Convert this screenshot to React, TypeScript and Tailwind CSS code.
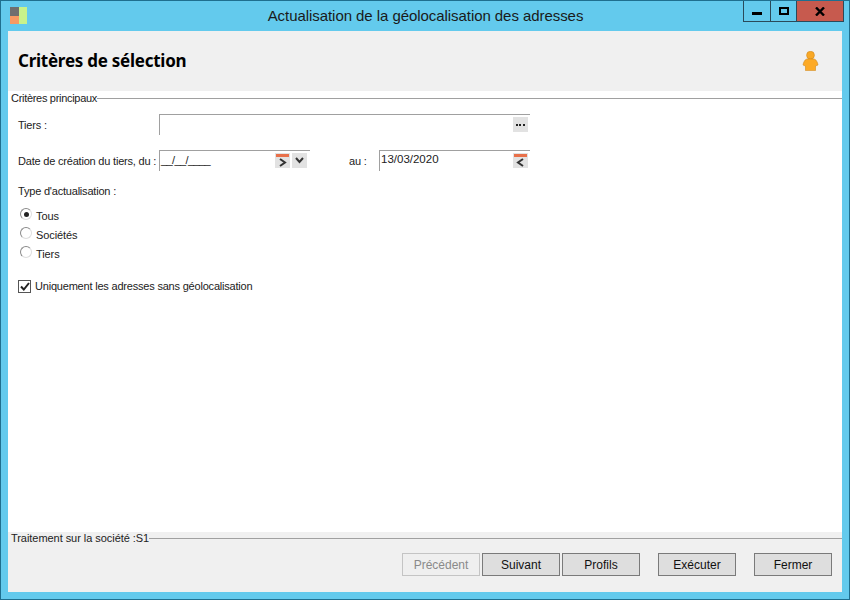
import React from 'react';

const uiFont = "font-['Liberation_Sans',Arial,sans-serif]";

const CalendarButton: React.FC<{ dir: 'next' | 'prev' }> = ({ dir }) => (
  <svg width="15" height="15" viewBox="0 0 15 15" className="shrink-0">
    <rect x="0" y="0" width="15" height="15" fill="#e2e2e2" />
    <rect x="1" y="1" width="13" height="3" fill="#e8704a" />
    <path
      d={dir === 'next' ? 'M5 6 L10 9.5 L5 13' : 'M10 6 L5 9.5 L10 13'}
      fill="none"
      stroke="#333"
      strokeWidth="2"
    />
  </svg>
);

const Radio: React.FC<{ label: string; checked?: boolean }> = ({ label, checked }) => (
  <div className="flex items-center h-[19px]">
    <span className="w-[12px] h-[12px] rounded-full border border-t-[#8a8a8a] border-l-[#8a8a8a] border-r-[#dedede] border-b-[#dedede] bg-white flex items-center justify-center -mt-[5px]">
      {checked && <span className="w-[5px] h-[5px] rounded-full bg-[#222]" />}
    </span>
    <span className="ml-[4px] text-[11px] tracking-[-0.1px] text-[#222]">{label}</span>
  </div>
);

const Button: React.FC<{ label: string; disabled?: boolean; className?: string }> = ({ label, disabled, className }) => (
  <button
    className={
      disabled
        ? `w-[78px] h-[23px] border border-[#c4c4c4] bg-[#efefef] text-[12px] text-[#8a8a8a] ${className ?? ''}`
        : `w-[78px] h-[23px] border border-[#7a7a7a] bg-[#dedede] text-[12px] text-[#111] ${className ?? ''}`
    }
  >
    {label}
  </button>
);

export default function App() {
  return (
    <div className={`w-[850px] h-[600px] bg-[#63caed] border border-[#1f6f8f] flex flex-col overflow-hidden ${uiFont}`}>
      {/* title bar */}
      <div className="h-[30px] shrink-0 flex items-start">
        <svg width="18" height="18" viewBox="0 0 18 18" className="ml-[9px] mt-[6px] shrink-0">
          <rect x="0" y="0" width="9" height="9" fill="#6f6f6f" />
          <rect x="0" y="9" width="9" height="8" fill="#f79a63" />
          <rect x="9" y="0" width="8" height="17" fill="#c8f28a" />
        </svg>
        <div className="flex-1 pl-[80px] text-center text-[15px] tracking-[-0.06px] leading-[30px] text-[#1a1a1a]">
          Actualisation de la géolocalisation des adresses
        </div>
        <div className="flex h-[21px] border-l border-b border-r border-[#2a4a5a] shrink-0 mr-[5px]">
          <div className="w-[27px] flex items-center justify-center border-r border-[#2a4a5a]">
            <span className="w-[10px] h-[3px] bg-black mt-[5px]" />
          </div>
          <div className="w-[26px] flex items-center justify-center border-r border-[#2a4a5a]">
            <span className="w-[10px] h-[8px] border-2 border-black" />
          </div>
          <div className="w-[46px] flex items-center justify-center bg-[#c75a4e]">
            <svg width="10" height="9" viewBox="0 0 10 9">
              <path d="M1 0.5 L9 8.5 M9 0.5 L1 8.5" stroke="#000" strokeWidth="2.4" />
            </svg>
          </div>
        </div>
      </div>

      {/* window body */}
      <div className="flex-1 mx-[7px] mb-[7px] flex flex-col bg-white min-h-0">
        <div className="h-[60px] shrink-0 bg-[#f0f0f0] flex items-center justify-between pl-[10px] pr-[23px]">
          <h1 className="text-[17px] font-bold text-black font-['Noto_Sans',sans-serif] tracking-[-0.25px]">Critères de sélection</h1>
          <svg width="17" height="20" viewBox="0 0 17 20">
            <circle cx="8.5" cy="4.2" r="3.9" fill="#f9a825" stroke="#d08a20" strokeWidth="0.6" />
            <path
              d="M5.5 8 H11.5 C13.5 8 14.5 9.5 15.5 12 L16 14 L13.5 15 V19.6 H3.5 V15 L1 14 L1.5 12 C2.5 9.5 3.5 8 5.5 8 Z"
              fill="#fdaa26"
              stroke="#d08a20"
              strokeWidth="0.6"
            />
          </svg>
        </div>

        <div className="flex-1 flex flex-col min-h-0 text-[11px] tracking-[-0.2px] text-[#222]">
          <div className="flex items-center h-[14px]">
            <span className="pl-[3px] leading-[14px] tracking-[-0.3px]">Critères principaux</span>
            <div className="flex-1 h-px bg-[#a0a0a0]" />
          </div>

          <div className="pl-[10px] pt-[9px] flex flex-col">
            <div className="flex h-[21px]">
              <span className="w-[141px] pt-[3px]">Tiers :</span>
              <div className="w-[371px] border-t border-l border-[#a0a0a0] flex justify-end items-start pt-[2px] pr-[2px]">
                <span className="w-[15px] h-[15px] bg-[#e2e2e2] flex items-center justify-center">
                  <span className="w-[9px] border-b-2 border-dotted border-[#222]" />
                </span>
              </div>
            </div>

            <div className="flex h-[21px] mt-[15px]">
              <span className="w-[141px] pt-[3px] whitespace-nowrap">Date de création du tiers, du :</span>
              <div className="w-[151px] border-t border-l border-[#a0a0a0] flex items-start pr-[3px]">
                <span className="pl-[1px] pt-[1px] flex-1 tracking-[-0.6px]">__/__/____</span>
                <div className="flex gap-[2px] pt-[2px]">
                  <CalendarButton dir="next" />
                  <span className="w-[15px] h-[15px] bg-[#e2e2e2] flex items-center justify-center">
                    <svg width="9" height="7" viewBox="0 0 9 7">
                      <path d="M1 1 L4.5 5 L8 1" fill="none" stroke="#333" strokeWidth="2" />
                    </svg>
                  </span>
                </div>
              </div>
              <span className="ml-[39px] w-[30px] pt-[3px] whitespace-nowrap">au :</span>
              <div className="w-[151px] border-t border-l border-[#a0a0a0] flex items-start justify-between pr-[2px]">
                <span className="pl-[1px] text-[11.5px] tracking-normal">13/03/2020</span>
                <div className="pt-[2px]">
                  <CalendarButton dir="prev" />
                </div>
              </div>
            </div>

            <div className="mt-[13px] h-[14px] leading-[14px]">Type d'actualisation :</div>

            <div className="mt-[9px] flex flex-col pl-[2px]">
              <Radio label="Tous" checked />
              <Radio label="Sociétés" />
              <Radio label="Tiers" />
            </div>

            <div className="mt-[14px] flex items-center h-[16px]">
              <span className="w-[13px] h-[13px] border border-[#555] bg-white flex items-center justify-center">
                <svg width="10" height="9" viewBox="0 0 10 9">
                  <path d="M1 4.5 L3.8 7.5 L9 1" fill="none" stroke="#222" strokeWidth="2" />
                </svg>
              </span>
              <span className="ml-[4px]">Uniquement les adresses sans géolocalisation</span>
            </div>
          </div>
        </div>

        {/* footer */}
        <div className="h-[60px] shrink-0 bg-[#f0f0f0] flex flex-col">
          <div className="flex items-center h-[14px] -mt-[1px]">
            <span className="pl-[3px] text-[11px] tracking-[-0.05px] leading-[14px] text-[#222]">Traitement sur la société :S1</span>
            <div className="flex-1 h-px bg-[#a0a0a0]" />
          </div>
          <div className="flex justify-end pr-[10px] mt-[8px]">
            <Button label="Précédent" disabled />
            <Button label="Suivant" className="ml-[2px]" />
            <Button label="Profils" className="ml-[2px]" />
            <Button label="Exécuter" className="ml-[18px]" />
            <Button label="Fermer" className="ml-[18px]" />
          </div>
        </div>
      </div>
    </div>
  );
}
